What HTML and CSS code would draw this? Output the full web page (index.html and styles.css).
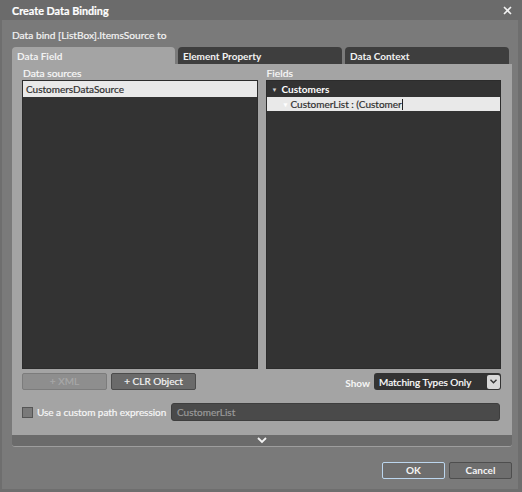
FILE: index.html
```html
<!DOCTYPE html>
<html>
<head>
<meta charset="utf-8">
<link rel="stylesheet" href="styles.css">
</head>
<body>
<div class="window">
  <div class="titlebar">
    <span class="title">Create Data Binding</span>
    <svg class="close" width="9" height="9" viewBox="0 0 9 9"><path d="M1 1 L8 8 M8 1 L1 8" stroke="#f2f2f2" stroke-width="1.6"/></svg>
  </div>
  <div class="content">
    <div class="subtitle">Data bind [ListBox].ItemsSource to</div>
    <div class="tabs">
      <div class="tab active">Data Field</div>
      <div class="tab">Element Property</div>
      <div class="tab">Data Context</div>
    </div>
    <div class="panel">
      <div class="columns">
        <div class="col">
          <div class="label">Data sources</div>
          <div class="list">
            <div class="row sel">CustomersDataSource</div>
          </div>
          <div class="btnrow">
            <div class="btn disabled">+ XML</div>
            <div class="btn">+ CLR Object</div>
          </div>
        </div>
        <div class="col">
          <div class="label">Fields</div>
          <div class="list">
            <div class="row tree"><span class="tri">&#9660;</span>Customers</div>
            <div class="row sel sub"><span class="tri light">&#9660;</span>CustomerList : (Customer<span class="caret"></span></div>
          </div>
          <div class="showrow">
            <span class="showlabel">Show</span>
            <div class="combo">
              <span>Matching Types Only</span>
              <span class="dd"><svg width="7" height="5" viewBox="0 0 7 5"><path d="M0.5 0.8 L3.5 3.8 L6.5 0.8" stroke="#333" stroke-width="1.4" fill="none"/></svg></span>
            </div>
          </div>
        </div>
      </div>
      <div class="pathrow">
        <span class="check"></span>
        <span class="pathlabel">Use a custom path expression</span>
        <div class="pathbox">CustomerList</div>
      </div>
    </div>
    <div class="expander">
      <svg width="10" height="7" viewBox="0 0 10 7"><path d="M1 1 L5 5 L9 1" stroke="#f4f4f4" stroke-width="1.8" fill="none"/></svg>
    </div>
    <div class="footer">
      <div class="fbtn ok">OK</div>
      <div class="fbtn">Cancel</div>
    </div>
  </div>
</div>
</body>
</html>
```

FILE: styles.css
```css
* { box-sizing: border-box; }
html, body { margin: 0; padding: 0; }
body {
  width: 522px;
  height: 492px;
  overflow: hidden;
  font-family: Lato, "Open Sans", sans-serif;
  font-size: 10px;
  background: #6e6e6e;
  -webkit-text-stroke: 0.2px;
}
.window {
  width: 522px;
  height: 492px;
  background: #7a7a7a;
  display: flex;
  flex-direction: column;
  border-left: 2px solid #6e6e6e;
  border-right: 4px solid #6e6e6e;
  border-bottom: 3px solid #6e6e6e;
}
.titlebar {
  height: 20px;
  flex: none;
  background: #6b6b6b;
  display: flex;
  align-items: center;
  justify-content: space-between;
  margin: 0 -4px 0 -2px;
  padding-left: 12px;
  padding-right: 10px;
}
.title {
  color: #ffffff;
  font-weight: bold;
  font-size: 10.8px;
}
.content {
  flex: 1;
  padding: 0 6px 0 10px;
  display: flex;
  flex-direction: column;
}
.subtitle {
  color: #f4f4f4;
  height: 27px;
  line-height: 30px;
  font-size: 10.2px;
}
.tabs {
  display: flex;
  gap: 3px;
  height: 17px;
}
.tab {
  width: 164px;
  background: #3e3e3e;
  color: #f2f2f2;
  font-weight: bold;
  border-radius: 4px 4px 0 0;
  padding-left: 5px;
  line-height: 18px;
  -webkit-text-stroke: 0;
}
.tab.active {
  width: 163px;
  background: #a4a4a4;
}
.panel {
  background: #a4a4a4;
  height: 371px;
  padding: 2px 11px 0 10px;
  display: flex;
  flex-direction: column;
}
.columns {
  display: flex;
  gap: 8px;
}
.col {
  flex: 1;
  display: flex;
  flex-direction: column;
}
.label {
  color: #f8f8f8;
  font-size: 10.3px;
  height: 14px;
  line-height: 14px;
  padding-left: 1px;
}
.list {
  height: 289px;
  background: #333333;
  border: 1px solid #2c2c2c;
}
.row {
  height: 16px;
  line-height: 16px;
  padding-left: 3px;
}
.row.sel {
  background: #e9e9e9;
  color: #303030;
}
.row.tree {
  color: #ffffff;
  font-weight: bold;
  padding-left: 5px;
  -webkit-text-stroke: 0;
}
.row.sub {
  padding-left: 16px;
  height: 14px;
  line-height: 14px;
}
.tri {
  font-size: 6px;
  display: inline-block;
  width: 10px;
  color: #cfcfcf;
  vertical-align: 1px;
}
.tri.light { color: #ffffff; width: 8px; }
.caret {
  display: inline-block;
  width: 1px;
  height: 11px;
  background: #222;
  vertical-align: -2px;
}
.btnrow {
  display: flex;
  gap: 4px;
  margin-top: 4px;
  height: 17px;
}
.btn {
  width: 85px;
  height: 17px;
  border: 1px solid #4c4c4c;
  border-radius: 2px;
  background: #6a6a6a;
  color: #f4f4f4;
  text-align: center;
  line-height: 15px;
}
.btn.disabled {
  background: #8e8e8e;
  border-color: #7c7c7c;
  color: #a8a8a8;
}
.showrow {
  display: flex;
  justify-content: flex-end;
  align-items: center;
  gap: 4px;
  margin-top: 4px;
  height: 17px;
}
.showlabel {
  color: #f6f6f6;
  font-weight: bold;
  margin-top: 3px;
  -webkit-text-stroke: 0;
}
.combo {
  width: 127px;
  height: 17px;
  background: #333333;
  border-radius: 3px;
  color: #ffffff;
  display: flex;
  align-items: center;
  justify-content: space-between;
  padding: 0 1px 0 5px;
}
.dd {
  width: 13px;
  height: 14px;
  background: #d8d8d8;
  border-radius: 2px;
  display: flex;
  align-items: center;
  justify-content: center;
}
.pathrow {
  display: flex;
  align-items: center;
  margin-top: 13px;
  height: 18px;
}
.check {
  flex: none;
  width: 11px;
  height: 11px;
  background: #7a7a7a;
  border: 1px solid #555;
  margin-right: 4px;
}
.pathlabel {
  flex: none;
  white-space: nowrap;
  color: #f6f6f6;
  font-size: 10px;
  letter-spacing: -0.05px;
  width: 134px;
}
.pathbox {
  flex: 1;
  height: 18px;
  background: #4a4a4a;
  border: 1px solid #3e3e3e;
  border-radius: 3px;
  color: #9a9a9a;
  line-height: 16px;
  padding-left: 5px;
  margin-right: 1px;
}
.expander {
  height: 12px;
  background: #6b6b6b;
  border-bottom: 1px solid #9e9e9e;
  border-radius: 0 0 3px 3px;
  display: flex;
  justify-content: center;
  align-items: center;
}
.footer {
  display: flex;
  justify-content: flex-end;
  gap: 4px;
  margin-top: 15px;
}
.fbtn {
  width: 63px;
  height: 17px;
  background: #6e6e6e;
  border: 1px solid #4e4e4e;
  border-radius: 2px;
  color: #f4f4f4;
  font-weight: bold;
  text-align: center;
  line-height: 15px;
  -webkit-text-stroke: 0;
}
.fbtn.ok {
  border-color: #bcd6ee;
}
```
